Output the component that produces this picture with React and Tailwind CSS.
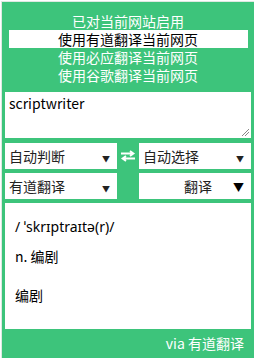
import React from 'react';

const Arrow = ({ big }) => (
  <span className={big ? 'text-[11px] text-black' : 'text-[8px] text-[#222]'}>▼</span>
);

const Select = ({ label, center, big }) => (
  <div className="flex h-[26px] items-center bg-white px-[4px]">
    <span className={center ? 'flex-1 text-center pl-[20px]' : 'flex-1'}>{label}</span>
    <span className="pr-[3px]"><Arrow big={big} /></span>
  </div>
);

const App = () => {
  return (
    <div
      className="h-[358px] w-[254px] bg-white pl-[1px] pt-[1px] text-[14px] text-[#222]"
      style={{ fontFamily: '"Noto Sans CJK SC", "Microsoft YaHei", sans-serif' }}
    >
      <div className="flex h-full flex-col border-l border-t border-[#dfe8e2] bg-[#3dc47b]">
        {/* 网页翻译选项 */}
        <div className="flex flex-col items-center pt-[10px] leading-[18px] text-white">
          <div>已对当前网站启用</div>
          <div className="w-[239px] bg-white text-center text-black">使用有道翻译当前网页</div>
          <div>使用必应翻译当前网页</div>
          <div>使用谷歌翻译当前网页</div>
        </div>

        {/* 输入框 */}
        <div className="relative mx-[3px] mt-[8px] h-[46px] bg-white px-[4px] pt-[1px] leading-[20px] text-black">
          scriptwriter
          <svg className="absolute bottom-[2px] right-[2px]" width="8" height="8" viewBox="0 0 8 8">
            <path d="M1 8 L8 1 M4 8 L8 4" stroke="#888" strokeWidth="1" />
          </svg>
        </div>

        {/* 语言选择 */}
        <div className="mx-[3px] mt-[5px] grid grid-cols-[112px_1fr_112px] gap-y-[4px]">
          <Select label="自动判断" />
          <div className="flex items-center justify-center">
            <svg width="16" height="12" viewBox="0 0 16 12">
              <path d="M1 3.5 H13 M10 1 L13.5 3.5 L10 6" stroke="#fff" strokeWidth="1.8" fill="none" />
              <path d="M15 8.5 H3 M6 6 L2.5 8.5 L6 11" stroke="#fff" strokeWidth="1.8" fill="none" />
            </svg>
          </div>
          <Select label="自动选择" />
          <Select label="有道翻译" />
          <div />
          <Select label="翻译" center big />
        </div>

        {/* 结果 */}
        <div className="mx-[3px] mt-[4px] h-[126px] bg-white px-[10px] pt-[14px] leading-[20px] text-black">
          <div style={{ fontFamily: '"Noto Sans", "DejaVu Sans", sans-serif' }}>/ ˈskrɪptraɪtə(r)/</div>
          <div className="mt-[9px]">n. 编剧</div>
          <div className="mt-[19px]">编剧</div>
        </div>

        {/* 底部 */}
        <div className="flex flex-1 items-center justify-end pr-[10px] text-[14px] text-white">
          via 有道翻译
        </div>
      </div>
    </div>
  );
};

export default App;
